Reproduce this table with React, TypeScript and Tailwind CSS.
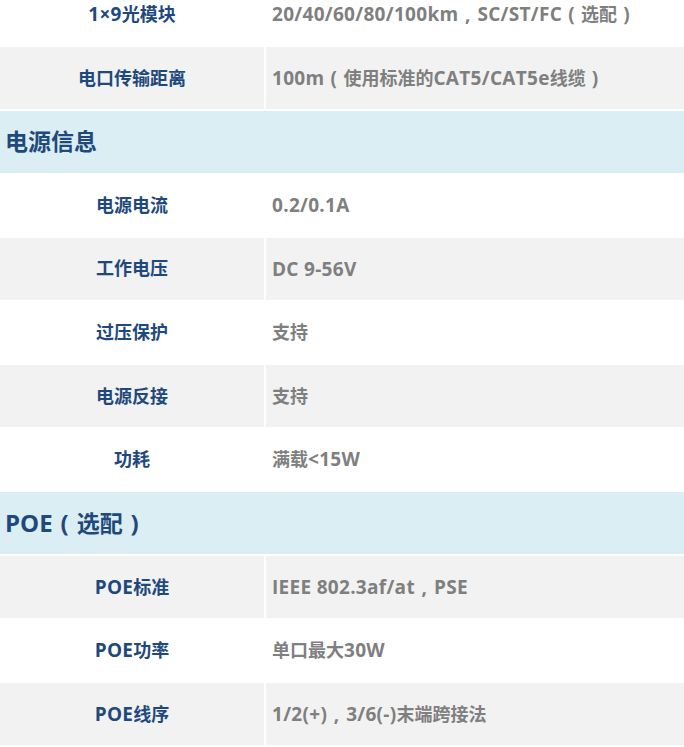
import React from "react";

type Row =
  | { kind: "header"; title: string }
  | { kind: "row"; label: string; value: string; shade: boolean };

const rows: Row[] = [
  { kind: "row", label: "1×9光模块", value: "20/40/60/80/100km，SC/ST/FC（选配）", shade: false },
  { kind: "row", label: "电口传输距离", value: "100m（使用标准的CAT5/CAT5e线缆）", shade: true },
  { kind: "header", title: "电源信息" },
  { kind: "row", label: "电源电流", value: "0.2/0.1A", shade: false },
  { kind: "row", label: "工作电压", value: "DC 9-56V", shade: true },
  { kind: "row", label: "过压保护", value: "支持", shade: false },
  { kind: "row", label: "电源反接", value: "支持", shade: true },
  { kind: "row", label: "功耗", value: "满载<15W", shade: false },
  { kind: "header", title: "POE（选配）" },
  { kind: "row", label: "POE标准", value: "IEEE 802.3af/at，PSE", shade: true },
  { kind: "row", label: "POE功率", value: "单口最大30W", shade: false },
  { kind: "row", label: "POE线序", value: "1/2(+)，3/6(-)末端跨接法", shade: true },
];

const font = {
  fontFamily: '"Open Sans", "Noto Sans CJK SC", sans-serif',
};

const punctMap: Record<string, string> = { "，": ",", "（": "(", "）": ")" };

function Mixed({ text, latinClass }: { text: string; latinClass: string }) {
  const parts = text.match(/[，（）]|[\u4e00-\u9fff]+|[^\u4e00-\u9fff，（）]+/g) || [];
  return (
    <>
      {parts.map((p, i) => {
        if (/^[，（）]$/.test(p)) {
          return (
            <span key={i} className={`inline-block w-[1em] text-center ${latinClass}`}>
              {punctMap[p]}
            </span>
          );
        }
        if (/^[\u4e00-\u9fff]+$/.test(p)) return <span key={i}>{p}</span>;
        return (
          <span key={i} className={latinClass}>
            {p}
          </span>
        );
      })}
    </>
  );
}

export default function App() {
  return (
    <div className="w-[684px] h-[747px] overflow-hidden bg-white" style={font}>
      <div className="flex flex-col gap-[1.6px] -mt-[16.5px]">
        {rows.map((r, i) =>
          r.kind === "header" ? (
            <div key={i} className="h-[62px] bg-[#daeef3] flex items-center pl-[5px]">
              <span className="text-[23px] font-bold text-[#1f497d] whitespace-nowrap">
                <Mixed text={r.title} latinClass="text-[24px]" />
              </span>
            </div>
          ) : (
            <div key={i} className="h-[62px] grid grid-cols-[264px_1fr] gap-x-[2px]">
              <div className={`flex items-center justify-center ${r.shade ? "bg-[#f2f2f2]" : "bg-white"}`}>
                <span className="text-[18px] font-bold text-[#1f497d] whitespace-nowrap">
                  <Mixed text={r.label} latinClass="text-[19px] tracking-[0.3px]" />
                </span>
              </div>
              <div className={`flex items-center pl-[6px] ${r.shade ? "bg-[#f2f2f2]" : "bg-white"}`}>
                <span className="text-[18px] font-bold text-[#7f7f7f] whitespace-nowrap">
                  <Mixed text={r.value} latinClass="text-[19px] tracking-[0.3px]" />
                </span>
              </div>
            </div>
          )
        )}
      </div>
    </div>
  );
}
